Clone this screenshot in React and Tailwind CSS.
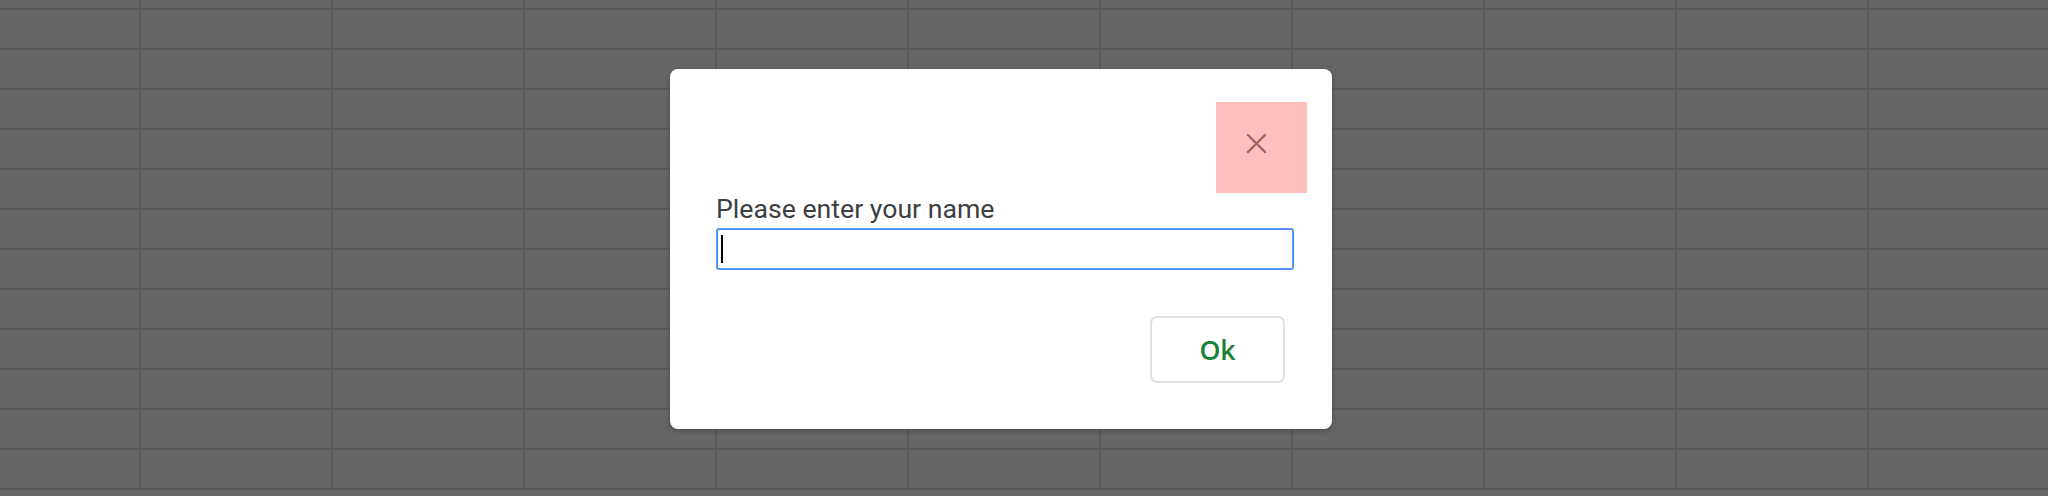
import React from "react";

const COLS = 11;
const ROWS = 13;

function Sheet() {
  const rows = [];
  for (let r = 0; r < ROWS; r++) {
    const cells = [];
    for (let c = 0; c < COLS; c++) {
      cells.push(
        <div
          key={c}
          className={
            (c === 0 ? "w-[141px] " : "w-[192px] ") +
            "shrink-0 border-r-2 border-b-2 border-[#5a5a5a] h-full"
          }
        />
      );
    }
    rows.push(
      <div key={r} className={(r === 0 ? "h-[10px] " : "h-[40px] ") + "flex shrink-0"}>
        {cells}
      </div>
    );
  }
  return <div className="flex flex-col w-[2048px] h-[496px] overflow-hidden bg-[#666666]">{rows}</div>;
}

export default function App() {
  return (
    <div className="relative w-[2048px] h-[496px] overflow-hidden bg-[#666666]" style={{ fontFamily: "Roboto, 'Liberation Sans', sans-serif" }}>
      <Sheet />
      <div className="absolute inset-0 flex items-start pt-[69px] pl-[670px]">
        <div
          role="dialog"
          className="w-[662px] h-[360px] bg-white rounded-[8px] shadow-[0_2px_6px_rgba(0,0,0,0.25)] flex flex-col pt-[33px]"
        >
          <div className="flex justify-end pr-[25px]">
            <button className="w-[91px] h-[91px] bg-[#ffbfbf] flex items-start justify-start pt-[31px] pl-[30px]">
              <svg width="21" height="21" viewBox="0 0 21 21" fill="none">
                <path d="M2 2 L19 19 M19 2 L2 19" stroke="#a46262" strokeWidth="2.4" strokeLinecap="round" />
              </svg>
            </button>
          </div>
          <div className="pl-[46px] mt-[1px] text-[26.67px] leading-[31px] text-[#3c4043]">
            Please enter your name
          </div>
          <div className="ml-[46px] mt-[3px] w-[578px] h-[42px] border-2 border-[#5594f7] rounded-[3px] relative">
            <div className="absolute left-[3px] top-[5px] w-[2px] h-[28px] bg-black" />
          </div>
          <div className="flex justify-end pr-[47px] mt-[46px]">
            <button
              className="w-[135px] h-[67px] border-2 border-[#e0e1e5] rounded-[7px] bg-white text-[#188038] text-[26.67px] font-semibold flex items-center justify-center"
              style={{ fontFamily: "'Open Sans', Lato, sans-serif" }}
            >
              Ok
            </button>
          </div>
        </div>
      </div>
    </div>
  );
}
